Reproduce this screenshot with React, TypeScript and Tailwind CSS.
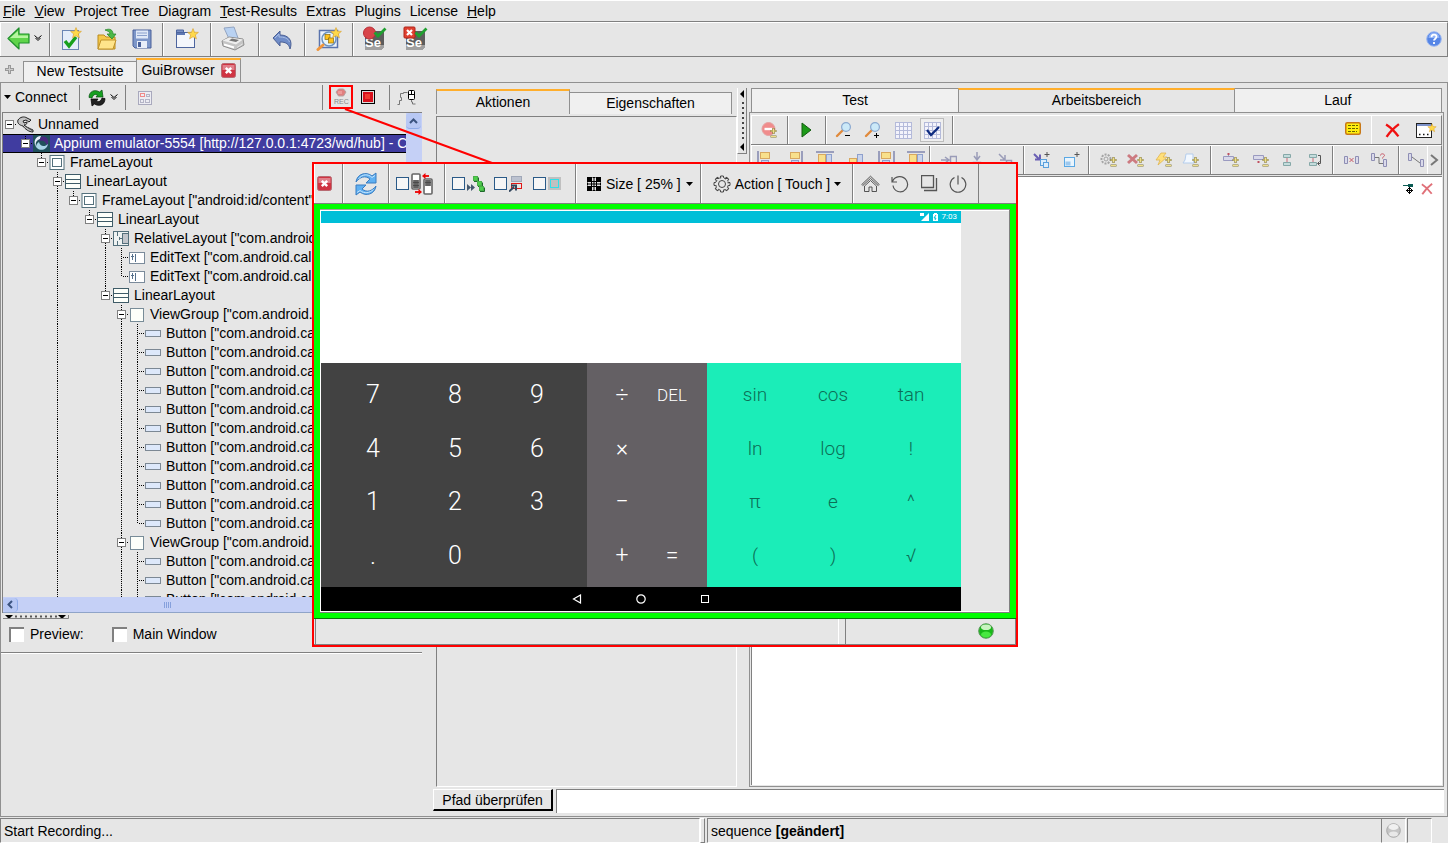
import React from "react";

type Kids = { children?: React.ReactNode };

function Svg({ w = 16, h = 16, vb, children }: Kids & { w?: number; h?: number; vb?: string }) {
  return (
    <svg width={w} height={h} viewBox={vb ?? `0 0 ${w} ${h}`} fill="none" className="block shrink-0" aria-hidden="true">
      {children}
    </svg>
  );
}

function Tool({ label, children, className = "" }: Kids & { label: string; className?: string }) {
  return (
    <button type="button" aria-label={label} className={`flex shrink-0 items-center justify-center ${className}`}>
      {children}
    </button>
  );
}

function Group({ children, className = "" }: Kids & { className?: string }) {
  return (
    <div className={`flex shrink-0 items-center border-r border-l border-r-[#808080] border-l-white ${className}`}>{children}</div>
  );
}

const STAR = "M0-6 1.6-2 6-1.8 2.6 1 3.8 5.4 0 3-3.8 5.4-2.6 1-6-1.8-1.6-2Z";

function Star({ x, y, s = 0.9 }: { x: number; y: number; s?: number }) {
  return <path d={STAR} transform={`translate(${x} ${y}) scale(${s})`} fill="#ffd94a" stroke="#d9a02c" strokeWidth="0.7" />;
}

function BackIcon() {
  return (
    <Svg w={23} h={23}>
      <path d="M1 11.5 12 1v6h10v9H12v6Z" fill="#5fd44a" stroke="#1f8f2c" strokeWidth="1.2" strokeLinejoin="round" />
      <path d="M3 11 11 4v4.500h10v2.500Z" fill="#b7f5a0" />
    </Svg>
  );
}

function DownDouble() {
  return (
    <Svg w={8} h={7}>
      <path d="M0.500 0.500 4 3.500 7.500 0.500M1.500 3 4 5.500 6.500 3" stroke="#000" strokeWidth="1" />
    </Svg>
  );
}

function NewDocIcon() {
  return (
    <Svg w={21} h={24}>
      <rect x="1.5" y="3.500" width="16" height="19" fill="#e4edf9" stroke="#6b86b4" />
      <path d="M4 14 8 19 15 10" stroke="#17a01c" strokeWidth="3.4" />
      <Star x={15} y={6} />
    </Svg>
  );
}

function OpenIcon() {
  return (
    <Svg w={22} h={24}>
      <path d="M2 8h6l2 2h9v12H2Z" fill="#f4c84a" stroke="#b98a1c" />
      <path d="M5 13h15l-3 9H2Z" fill="#ffe48a" stroke="#c0922a" />
      <path d="M9 3c5-2 8 0 8 4h3l-4 5-5-5h3c0-2-2-3-5-4Z" fill="#4cb848" stroke="#2b8a30" strokeWidth="0.800" />
    </Svg>
  );
}

function SaveIcon() {
  return (
    <Svg w={20} h={20}>
      <path d="M1 1h18v18H3l-2-2Z" fill="#7d96c8" stroke="#4a619a" />
      <rect x="4" y="1.500" width="12" height="8" fill="#dfe8f7" />
      <path d="M5 4h10M5 6.500h10" stroke="#8aa0cc" />
      <rect x="5" y="12" width="10" height="7" fill="#e9eef8" />
      <rect x="6" y="13" width="3" height="5" fill="#4a619a" />
    </Svg>
  );
}

function NewWindowIcon() {
  return (
    <Svg w={24} h={22}>
      <path d="M1.500 5.500V2h7v3" fill="#7a90c4" stroke="#4d659e" />
      <rect x="1.500" y="4.500" width="18" height="15" fill="#f4f6fb" stroke="#4d659e" />
      <path d="M2 5h8v2H2Z" fill="#5f78b3" />
      <Star x={18} y={6} />
    </Svg>
  );
}

function PrintIcon() {
  return (
    <Svg w={24} h={25}>
      <path d="M3 2 13 1l4 11-8 3Z" fill="#b9d2f2" stroke="#93a5c2" />
      <path d="M1 15 8 11l14 2 1 6-9 5-12-4Z" fill="#c4c4c4" stroke="#909090" />
      <path d="M1.500 14.500 8 11.500l14 2-7 5Z" fill="#eeeeee" />
      <path d="M8 14.500 15 16l3-2-7-1.500Z" fill="#777" />
      <path d="M3 18.500 13 21.500" stroke="#fff" strokeWidth="2" />
      <path d="M16 21.500 21.500 18" stroke="#e6e6e6" />
    </Svg>
  );
}

function UndoIcon() {
  return (
    <Svg w={21} h={20}>
      <path d="M1 8 8 1v4c9 0 13 6 10 14-1-5-4-7-10-7v4Z" fill="#6f8cc8" stroke="#4a5f94" strokeLinejoin="round" />
      <path d="M3 8 7 4v3c5 0 9 1 10.500 5" stroke="#a9bde4" />
    </Svg>
  );
}

function SearchIcon() {
  return (
    <Svg w={26} h={24}>
      <rect x="3.500" y="3.500" width="18" height="17" fill="#eef3fb" stroke="#5a73ad" strokeWidth="1.500" />
      <circle cx="13" cy="12" r="7" fill="#e6f4fb" stroke="#6d93c0" strokeWidth="1.500" />
      <rect x="9" y="7.500" width="5" height="5" fill="#ffc21c" stroke="#8a6a10" strokeWidth="0.700" />
      <rect x="12.500" y="11" width="5" height="5" fill="#ffc21c" stroke="#8a6a10" strokeWidth="0.700" />
      <path d="M7 18 2 22.500" stroke="#f0963c" strokeWidth="3" strokeLinecap="round" />
      <Star x={20} y={6} />
    </Svg>
  );
}

function SeIcon({ stop }: { stop?: boolean }) {
  return (
    <Svg w={25} h={25}>
      <path d="M3 5h19v16l-3 3H3Z" fill="#5d5d5d" />
      <path d="M3 19h19v2l-3 3H3Z" fill="#a0a0a0" />
      <text x="3" y="21" fill="#fff" fontFamily="Liberation Sans" fontWeight="bold" fontSize="13">Se</text>
      {stop ? (
        <g>
          <rect x="1" y="1" width="11" height="11" rx="1" fill="#e04030" stroke="#b02418" />
          <path d="m4 4 5 5m0-5-5 5" stroke="#fff" strokeWidth="2.200" />
        </g>
      ) : (
        <circle cx="7.500" cy="7" r="6" fill="#d8454a" stroke="#b82c34" />
      )}
      <path d="m12.500 6.500 3.500 3.500 7.500-7.500" stroke="#20a030" strokeWidth="2.800" />
    </Svg>
  );
}

function HelpIcon() {
  return (
    <Svg>
      <circle cx="8" cy="8" r="7.300" fill="#5585e6" stroke="#9db8f0" />
      <path d="M2.500 7a5.500 5.500 0 0 1 11 0Z" fill="#8fb2f6" />
      <path d="M5.500 6.200c0-3.600 5-3.200 5-.4C10.500 7.600 8 7.800 8 9.600M8 11v2" stroke="#fff" strokeWidth="1.800" />
    </Svg>
  );
}

function CloseIcon() {
  return (
    <Svg w={15} h={15}>
      <rect x="0.500" y="0.500" width="14" height="14" rx="2" fill="#cf3442" stroke="#b86a72" />
      <path d="M1.500 2h12v5h-12Z" fill="#e0808a" />
      <path d="m4.800 4.800 5.400 5.400m0-5.400-5.400 5.400" stroke="#fff" strokeWidth="2.400" />
    </Svg>
  );
}

function CycleIcon() {
  return (
    <Svg w={18} h={18}>
      <path d="M1 8.500C1 2 7 0 11.500 3L14 1l1 7H8l1.500-2C7 4.500 5 6 4 9Z" fill="#16a020" stroke="#064d10" strokeWidth="0.700" />
      <path d="M17 9.500C17 16 11 18 6.500 15L4 17 3 10h7l-1.500 2c2.500 1.500 4.500 0 5.500-3Z" fill="#222" stroke="#000" strokeWidth="0.700" />
    </Svg>
  );
}

function RefreshIcon() {
  return (
    <Svg w={24} h={24}>
      <path d="M2 10C3 2 12-1 18 4l4-3v10H12l4-4C11 3 6 5 2 10Z" fill="#5fb0f2" stroke="#3a7cc0" />
      <path d="M22 14c-1 8-10 11-16 6l-4 3V13h10l-4 4c5 4 10 2 14-3Z" fill="#5fb0f2" stroke="#3a7cc0" />
      <path d="M4.500 7C8 2 14 1.500 18 5.500l3-2" stroke="#c5e4fb" />
      <path d="M19.500 17.500C16 21 10 22 6 18.500l-3 2" stroke="#c5e4fb" />
    </Svg>
  );
}

function GridBoxesIcon() {
  return (
    <Svg w={14} h={14}>
      <rect x="0.500" y="0.500" width="13" height="13" fill="#ececf2" stroke="#a9a9bd" />
      <rect x="2.500" y="2.500" width="4" height="3" stroke="#f08a8a" />
      <rect x="8.500" y="3.500" width="3" height="2" stroke="#b4b4c6" />
      <rect x="2.500" y="8.500" width="3" height="3" stroke="#b4b4c6" />
      <rect x="7.500" y="8.500" width="4" height="3" stroke="#b4b4c6" />
    </Svg>
  );
}

function RecIcon() {
  return (
    <Svg w={16} h={18}>
      <path d="M5.500 1h5l2.500 3-2.500 4h-5L3 4Z" fill="#e07f7f" stroke="#b8a0a0" />
      <path d="M5 3h4v3H5Z" fill="#ee9a9a" />
      <text x="1" y="16" fontSize="7" fill="#8a8a8a" fontFamily="Liberation Sans">REC</text>
    </Svg>
  );
}

function StopIcon() {
  return (
    <Svg w={14} h={14}>
      <rect x="0.500" y="0.500" width="13" height="13" fill="#dcdcdc" stroke="#000" />
      <rect x="2" y="2" width="10" height="10" fill="#d8101c" />
      <rect x="4" y="4" width="5" height="5" fill="#f03a30" />
    </Svg>
  );
}

function MouseIcon() {
  return (
    <Svg w={19} h={17}>
      <path d="M0.500 15.500h2v-4h2v-3h-1v-4h3v-1h4" stroke="#777" />
      <rect x="11.500" y="1.500" width="6" height="9" rx="1" fill="#fff" stroke="#000" />
      <path d="M11.500 5.500h6M14.500 1.500v4" stroke="#000" />
      <path d="M14.500 11v2h1v2h3" stroke="#777" />
    </Svg>
  );
}

function PlusMinus({ x, y }: { x: number; y: number }) {
  return (
    <g transform={`translate(${x} ${y})`}>
      <path d="M3.500 0v6M0.500 3h6M0.500 8.500h6" stroke="#857a3a" strokeWidth="2.200" />
      <path d="M3.500 0.500v5M1 3h5M1 8.500h5" stroke="#efe08a" strokeWidth="1" />
    </g>
  );
}

function Magnifier({ plus }: { plus?: boolean }) {
  return (
    <Svg w={17} h={16}>
      <path d="M8 8 2 14" stroke="#e08a3c" strokeWidth="2.400" strokeLinecap="round" />
      <circle cx="11" cy="5" r="4.400" fill="#cbe9f8" stroke="#8aa9d0" strokeWidth="1.200" />
      <path d={plus ? "M10 13.500h5M12.500 11v5" : "M10 13.500h5"} stroke="#000" />
    </Svg>
  );
}

function GridIcon({ check }: { check?: boolean }) {
  return (
    <Svg w={17} h={17}>
      <rect width="17" height="17" fill="#f3f3fb" />
      <path d="M0.500 0v17M4.500 0v17M8.500 0v17M12.500 0v17M16.500 0v17M0 0.500h17M0 4.500h17M0 8.500h17M0 12.500h17M0 16.500h17" stroke="#b4bada" />
      {check && <path d="m3 8 4 5 8-8" stroke="#0c2a80" strokeWidth="2.200" />}
    </Svg>
  );
}

function RemoveIcon() {
  return (
    <Svg w={18} h={17}>
      <circle cx="7.500" cy="7" r="6.500" fill="#f08c8c" stroke="#e4a0a0" />
      <path d="M3.500 7h8" stroke="#fff" strokeWidth="2.400" />
      <PlusMinus x={9} y={6} />
    </Svg>
  );
}

function NoteIcon() {
  return (
    <Svg w={16} h={13}>
      <rect x="0.750" y="0.750" width="14.500" height="11.500" rx="1.500" fill="#ffee10" stroke="#c87818" strokeWidth="1.500" />
      <path d="M3 3.500h10M3 6.500h10M3 9.500h9" stroke="#6b6400" strokeDasharray="3 1" />
    </Svg>
  );
}

function Cross({ color, s = 14 }: { color: string; s?: number }) {
  return (
    <Svg w={s} h={s} vb="0 0 14 14">
      <path d="M1 1.500C5 4 9 8 12.500 12.500M13 1C9 4 4 9 1.500 13" stroke={color} strokeWidth="2.200" />
    </Svg>
  );
}

function WinDotsIcon() {
  return (
    <Svg w={21} h={17}>
      <rect x="0.500" y="1.500" width="15" height="14" fill="#fff" stroke="#222" />
      <rect x="1" y="2" width="14" height="2" fill="#7d92c8" />
      <path d="M3 12.500h11" stroke="#111" strokeWidth="1.500" strokeDasharray="1.500 2.500" />
      <Star x={16} y={6} s={0.7} />
    </Svg>
  );
}

function AlignIcon({ kind }: { kind: number }) {
  const yellow = "#f8e08c";
  const blue = "#c9d4ec";
  return (
    <Svg w={18} h={20}>
      {kind === 0 && <path d="M2 1v18" stroke="#9a9ebc" strokeWidth="2" />}
      {kind === 1 && <path d="M16 1v18" stroke="#9a9ebc" strokeWidth="2" />}
      {(kind === 2 || kind === 5) && <path d="M0 2h18" stroke="#9a9ebc" strokeWidth="2" />}
      {kind === 4 && <path d="M2 1v18M17 1v18" stroke="#9a9ebc" strokeWidth="2" />}
      {kind === 0 || kind === 1 || kind === 4 ? (
        <g>
          <rect x="4.500" y="2.500" width="9" height="6" fill={yellow} stroke="#d8a860" />
          <rect x="5.500" y="10.500" width="7" height="6" fill={blue} stroke="#8fa0cc" />
        </g>
      ) : (
        <g>
          <rect x="2.500" y={kind === 3 ? 8.5 : 4.5} width="7" height="8" fill={yellow} stroke="#d8a860" />
          <rect x="10.500" y="4.500" width="5" height="13" fill={blue} stroke="#8fa0cc" />
        </g>
      )}
    </Svg>
  );
}

function ArrowBox({ kind }: { kind: "right" | "down" | "diag" }) {
  return (
    <Svg w={16} h={16}>
      {kind === "right" && <path d="M0 8h7M4 5l4 3-4 3M9.500 4.500h6v8h-6z" stroke="#9a9cb8" strokeWidth="1.500" />}
      {kind === "down" && <path d="M8 0v7M5 4l3 4 3-4M4.500 10.500h7v5h-7z" stroke="#9a9cb8" strokeWidth="1.500" />}
      {kind === "diag" && <path d="m2 2 6 6M3 8h5V3M9.500 8.500h5v6h-5z" stroke="#9a9cb8" strokeWidth="1.500" />}
    </Svg>
  );
}

function AddShape({ diag }: { diag?: boolean }) {
  return (
    <Svg w={17} h={17}>
      <path d="M14 0v5M11.500 2.500h5" stroke="#555" />
      {diag ? (
        <g>
          <path d="m1 2 5 5M2 7.500h5v-5" stroke="#6a5fb4" strokeWidth="2" />
          <rect x="7.500" y="7.500" width="6" height="6" fill="#dceefc" stroke="#5aa0dc" />
          <rect x="10.500" y="10.500" width="5" height="5" fill="#dceefc" stroke="#5aa0dc" />
        </g>
      ) : (
        <g>
          <rect x="1.500" y="5.500" width="10" height="9" fill="#eaf5fd" stroke="#5aa8e4" />
          <rect x="2.500" y="9.500" width="5" height="4" fill="#9cc8ee" />
        </g>
      )}
    </Svg>
  );
}

function AddNode({ kind }: { kind: "gear" | "cross" | "bolt" | "bell" | "boxup" | "boxdown" }) {
  return (
    <Svg w={18} h={17}>
      {kind === "gear" && (
        <g stroke="#a4a4a4">
          <circle cx="6" cy="7" r="4.500" strokeWidth="2" strokeDasharray="2 1.200" />
          <circle cx="6" cy="7" r="2" />
        </g>
      )}
      {kind === "cross" && <path d="m1 3 9 8M10 3 1 11" stroke="#cc7a80" strokeWidth="3" />}
      {kind === "bolt" && <path d="M6 1h5L8 5h4l-9 8 2-5H1Z" fill="#ffe07a" stroke="#e0b450" strokeWidth="0.800" />}
      {kind === "bell" && <path d="M4 2h7v6l1 3H1l2-3Z" fill="#f2f8ff" stroke="#b4cdec" />}
      {kind === "boxup" && <path d="M1.500 4.500h10v4h-10zM6.500 2v2" fill="#dadaea" stroke="#9a9ac0" />}
      {kind === "boxdown" && <path d="M1.500 3.500h10v4h-10z" fill="#dadaea" stroke="#9a9ac0" />}
      {kind === "boxup" && <path d="M5.500 1h2v2h-2z" fill="#c05060" />}
      {kind === "boxdown" && <path d="M5.500 9h2v2h-2z" fill="#c05060" />}
      <PlusMinus x={10} y={5} />
    </Svg>
  );
}

function Connector({ loop }: { loop?: boolean }) {
  return (
    <Svg w={14} h={14}>
      <path d="M1.500 1.500h7v3h-7zM1.500 9.500h7v3h-7z" fill="#c4dcdc" stroke="#86a8a8" />
      <path d="M5 5v4" stroke="#c86a78" />
      {loop && <path d="M10 2.500h2.500v8H10M9.500 10.500l2-2M9.500 10.500l2 2" stroke="#555" />}
    </Svg>
  );
}

function Pair({ kind }: { kind: "x" | "q" | "line" }) {
  if (kind === "x")
    return (
      <Svg w={15} h={12}>
        <path d="M0.500 2.500h3v7h-3zM11.500 2.500h3v7h-3z" fill="#dadaea" stroke="#8e8eb4" />
        <path d="m5.500 4 4 4m0-4-4 4" stroke="#c85a68" />
      </Svg>
    );
  return (
    <Svg w={17} h={14}>
      <path d="M0.500 0.500h3v7h-3zM12.500 6.500h3v7h-3z" fill="#dadaea" stroke="#8e8eb4" />
      {kind === "q" ? (
        <g>
          <path d="M4 4.500h4v6h4" stroke="#777" />
          <path d="M9.500 2.500c0-2.500 4-2 4 0 0 1.200-2 1-2 3" stroke="#c85a68" />
        </g>
      ) : (
        <path d="m4 4 8 6" stroke="#777" />
      )}
    </Svg>
  );
}

function PhonesIcon() {
  return (
    <Svg w={22} h={22}>
      <rect x="1" y="1" width="8" height="15" rx="1" fill="#fff" stroke="#666" strokeWidth="1.600" />
      <path d="M2 7h6v8H2Z" fill="#777" />
      <path d="M2 9.500h6M2 12.500h6M4 7v8M6 7v8" stroke="#444" strokeWidth="0.800" />
      <rect x="13" y="6" width="8" height="15" rx="1" fill="#fff" stroke="#666" strokeWidth="1.600" />
      <path d="M14 7h6v6h-6Z" fill="#777" />
      <path d="M14 9.500h6M16 7v6M18 7v6" stroke="#444" strokeWidth="0.800" />
      <path d="M18 3h-4" stroke="#e00" strokeWidth="1.800" />
      <path d="m14.500 0-3.500 3 3.500 3Z" fill="#e00" />
      <path d="M4 19h4" stroke="#e00" strokeWidth="1.800" />
      <path d="m7.500 16 3.500 3-3.500 3Z" fill="#e00" />
    </Svg>
  );
}

function CubesIcon() {
  return (
    <Svg w={18} h={16}>
      <path d="m8 3 5 4M13 8l2 4" stroke="#777" strokeDasharray="1 1" />
      {[[6, 0], [10, 5], [12, 10]].map(([x, y]) => (
        <g key={x}>
          <rect x={x + 0.5} y={y + 0.5} width="4" height="4" fill="#4ecf4a" stroke="#48b048" />
          <path d={`M${x + 1} ${y + 5.5}h4.500v-4`} stroke="#1d6a2a" />
        </g>
      ))}
      <path d="m0 8 4 3.500-4 3.500ZM4 8l4 3.500-4 3.500Z" fill="#44586e" />
    </Svg>
  );
}

function PickIcon() {
  return (
    <Svg w={15} h={16}>
      <rect x="2.500" y="0.500" width="10" height="5" fill="#bcc2d0" stroke="#a0a8b8" />
      <rect x="2.500" y="7.500" width="10" height="5" stroke="#e01818" />
      <path d="M0 15.500 5 11M2 9.500h5v5" stroke="#34485e" strokeWidth="2" />
    </Svg>
  );
}

function SizeIcon() {
  return (
    <Svg w={14} h={14}>
      <path d="M0 0h5v5H0ZM9 0h5v5H9ZM0 9h5v5H0ZM9 9h5v5H9Z" fill="#000" />
      <path d="M5.500 0.500h3M5.500 13.500h3M0.500 5.500v3M13.500 5.500v3M5 4.500h4M4.500 5v4M9.500 5v4M5 9.500h4M7 0v14M0 7h14" stroke="#000" strokeWidth="1" />
    </Svg>
  );
}

function GearIcon() {
  const teeth = Array.from({ length: 8 }, (_, i) => i * 45);
  return (
    <Svg w={18} h={18}>
      {teeth.map((a) => (
        <path key={a} d="M7.200 3 7.600 1h2.800l.4 2" transform={`rotate(${a} 9 9)`} stroke="#444" />
      ))}
      <circle cx="9" cy="9" r="6.200" stroke="#444" strokeDasharray="1.800 3.070" strokeDashoffset="-1.500" />
      <circle cx="9" cy="9" r="3.500" stroke="#444" />
    </Svg>
  );
}

function Caret() {
  return (
    <Svg w={7} h={4}>
      <path d="M0 0h7L3.500 4Z" fill="#000" />
    </Svg>
  );
}

function HomeIcon() {
  return (
    <Svg w={19} h={18}>
      <path d="M0.800 9.500 9.500 1.200l8.700 8.300-1 1L9.500 3.400 1.800 10.500ZM3.500 11v5.500H8v-4.500h3v4.500h4.500V11l-6-5.500Z" stroke="#444" strokeWidth="0.900" />
    </Svg>
  );
}

function RotateIcon() {
  return (
    <Svg w={18} h={18}>
      <path d="M1 2v5h5M1.500 6.500C4 0.500 12 0 15.500 5.500 19 12 13 18.500 7 16.500c-3-1-4.500-3-5-6" stroke="#555" strokeWidth="1.200" />
    </Svg>
  );
}

function StackIcon() {
  return (
    <Svg w={17} h={17}>
      <path d="M0.500 0.500h12v12H0.500ZM3 15.500h12.500V3" stroke="#555" strokeWidth="1.300" />
    </Svg>
  );
}

function PowerIcon() {
  return (
    <Svg w={18} h={18}>
      <path d="M5.500 2.500a7.800 7.800 0 1 0 7 0M9 0.500v9" stroke="#555" strokeWidth="1.200" />
    </Svg>
  );
}

/* ---------- tree ---------- */

type IconKind = "root" | "appium" | "frame" | "linear" | "relative" | "edit" | "group" | "button";
type Row = { d: number; icon: IconKind; text: string; open?: boolean; last?: boolean; rails: number[] };

const buttons = (n: number, ends: boolean, rails: number[]): Row[] =>
  Array.from({ length: n }, (_, i) => ({
    d: 8,
    icon: "button" as const,
    text: 'Button ["com.android.ca',
    last: ends && i === n - 1,
    rails,
  }));

const rows: Row[] = [
  { d: 0, icon: "root", text: "Unnamed", open: true, rails: [] },
  { d: 1, icon: "appium", text: "Appium emulator-5554 [http://127.0.0.1:4723/wd/hub] - Cu", open: true, last: true, rails: [] },
  { d: 2, icon: "frame", text: "FrameLayout", open: true, last: true, rails: [] },
  { d: 3, icon: "linear", text: "LinearLayout", open: true, rails: [] },
  { d: 4, icon: "frame", text: 'FrameLayout ["android:id/content"', open: true, last: true, rails: [3] },
  { d: 5, icon: "linear", text: "LinearLayout", open: true, last: true, rails: [3] },
  { d: 6, icon: "relative", text: 'RelativeLayout ["com.android', open: true, rails: [3] },
  { d: 7, icon: "edit", text: 'EditText ["com.android.cal', rails: [3, 6] },
  { d: 7, icon: "edit", text: 'EditText ["com.android.cal', last: true, rails: [3, 6] },
  { d: 6, icon: "linear", text: "LinearLayout", open: true, last: true, rails: [3] },
  { d: 7, icon: "group", text: 'ViewGroup ["com.android.', open: true, rails: [3] },
  ...buttons(11, true, [3, 7]),
  { d: 7, icon: "group", text: 'ViewGroup ["com.android.', open: true, rails: [3] },
  ...buttons(3, false, [3, 7]),
];

function NodeIcon({ kind }: { kind: IconKind }) {
  return (
    <Svg w={17} h={17}>
      {kind === "root" && (
        <g>
          <path d="M1 4c2-3 6-4 9-2l4 2-2 2-3-2-3 1 1 2 3-1c0 2-1 3-3 3 2 2 5 3 9 5v2c-4 0-8-3-10-6C2 9 0 7 1 4Z" fill="#c4c4c4" stroke="#222" />
          <path d="m8 10 7 4.500" stroke="#555" />
        </g>
      )}
      {kind === "appium" && (
        <g>
          <rect width="17" height="17" fill="#20505c" />
          <path d="M8 1C2 1 0 7 3 12c-1-5 1-7 4-8Z" fill="#e8eefa" />
          <path d="M8 2c6-2 9 4 6 9-1-5-4-6-8-5Z" fill="#4a2a80" />
          <path d="M3 12c4 5 11 3 12-3-3 3-8 3-9-2-2 1-3 3-3 5Z" fill="#a8d4e8" />
        </g>
      )}
      {kind === "frame" && (
        <g>
          <rect x="1" y="1.500" width="14" height="14" fill="#fff" stroke="#54707c" />
          <rect x="3.500" y="4.500" width="9" height="8" fill="#fff" stroke="#54707c" />
        </g>
      )}
      {kind === "linear" && (
        <g>
          <rect x="0.500" y="1.500" width="15" height="14" fill="#fdfffa" stroke="#3f5c68" />
          <path d="M1 6.500h14M1 10.500h14" stroke="#3f5c68" />
        </g>
      )}
      {kind === "relative" && (
        <g>
          <rect x="0.500" y="1.500" width="15" height="14" fill="#eef2f2" stroke="#54707c" />
          <path d="M4.500 2v4M4.500 11v4M6 8.500h3M6.500 7v3" stroke="#54707c" />
          <rect x="9.500" y="3.500" width="6" height="10" fill="#c2c6cc" stroke="#54707c" />
        </g>
      )}
      {kind === "edit" && (
        <g>
          <rect x="0.500" y="3.500" width="15" height="11" fill="#fff" stroke="#7b8b9b" />
          <path d="M3.500 5v6M6.500 5v8M2 7.500h3" stroke="#55708c" />
        </g>
      )}
      {kind === "group" && <rect x="1.500" y="2.500" width="13" height="13" fill="#fdfffa" stroke="#788c98" />}
      {kind === "button" && <rect x="0.500" y="5.500" width="15" height="6" fill="#dde8fa" stroke="#7c8894" />}
    </Svg>
  );
}

function Guides({ row }: { row: Row }) {
  const w = 14 + 16 * row.d;
  const c = 6.5 + 16 * row.d;
  const dots = { stroke: "#000", strokeDasharray: "1 1" };
  return (
    <Svg w={w} h={19}>
      {row.rails.map((r) => (
        <path key={r} d={`M${6.5 + 16 * r} 0v19`} {...dots} />
      ))}
      {row.d > 0 && <path d={`M${c} 0v${row.last ? 10 : 19}`} {...dots} />}
      <path d={`M${c + 1.5} 9.500h8`} {...dots} />
      {row.open && (
        <g>
          <rect x={c - 4} y="5.500" width="8" height="8" fill="#fff" stroke="#808080" />
          <path d={`M${c - 2.5} 9.500h5`} stroke="#000" />
        </g>
      )}
    </Svg>
  );
}

function Tree() {
  return (
    <ul className="h-[484px] overflow-hidden pt-0.5">
      {rows.map((row, i) => {
        const selected = i === 1;
        return (
          <li
            key={i}
            className={`flex h-[19px] items-center whitespace-nowrap ${selected ? "bg-[#403ca0] text-white shadow-[inset_0_1px_#000,inset_0_-1px_#000]" : ""}`}
          >
            <Guides row={row} />
            <NodeIcon kind={row.icon} />
            <span className="pb-0.5 pl-1">{row.text}</span>
          </li>
        );
      })}
    </ul>
  );
}

/* ---------- panels ---------- */

const menus: [string, string][] = [
  ["F", "ile"], ["V", "iew"], ["", "Project Tree"], ["", "Diagram"], ["T", "est-Results"],
  ["", "Extras"], ["", "Plugins"], ["", "License"], ["H", "elp"],
];

function ActiveTab({ children, className = "" }: Kids & { className?: string }) {
  return (
    <button type="button" className={`flex items-center justify-center border-t-2 border-r border-l border-t-[#ffae2c] border-r-[#909090] border-l-[#909090] bg-[#e6e6e6] pb-0.5 ${className}`}>
      {children}
    </button>
  );
}

function IdleTab({ children, className = "" }: Kids & { className?: string }) {
  return (
    <button type="button" className={`flex items-center justify-center border-t border-[#909090] bg-[#f0f0f0] pb-0.5 ${className}`}>
      {children}
    </button>
  );
}

function LeftPanel() {
  return (
    <section className="flex w-[421px] shrink-0 flex-col">
      <div className="flex h-[29px] items-center py-0.5">
        <button type="button" className="flex h-full w-[79px] items-center gap-1 border-r border-[#808080] pb-0.5 pl-[3px]">
          <Caret />
          Connect
        </button>
        <div className="flex h-full w-[46px] items-center justify-center gap-1 border-r border-[#808080]">
          <Tool label="Refresh"><CycleIcon /></Tool>
          <Tool label="More"><DownDouble /></Tool>
        </div>
        <Tool label="Layout" className="ml-3"><GridBoxesIcon /></Tool>
        <div className="h-full flex-1 border-r border-[#808080]" />
        <div className="flex w-[66px] items-center pb-px pl-1.5">
          <Tool label="Record" className="h-6 w-6 border-2 border-[#ff0000]"><RecIcon /></Tool>
          <Tool label="Stop" className="ml-2"><StopIcon /></Tool>
        </div>
        <div className="flex h-full w-[33px] items-center justify-center border-l border-[#808080]">
          <Tool label="Pointer"><MouseIcon /></Tool>
        </div>
      </div>
      <div className="ml-px border-t border-l border-[#808080]">
        <div className="flex">
          <div className="min-w-0 flex-1"><Tree /></div>
          <div className="w-4 bg-[#c5d0f6]">
            <Tool label="Scroll up" className="h-4 w-[15px] rounded-sm border-b border-[#8fabe8] bg-[#b8c8f4]">
              <Svg w={9} h={6}><path d="M1 5 4.500 1.500 8 5" stroke="#3c5480" strokeWidth="2" /></Svg>
            </Tool>
          </div>
        </div>
        <div className="flex h-4 items-center border-b border-[#8fa4c8] bg-[#c5d0f6]">
          <Tool label="Scroll left" className="h-[14px] w-[15px] rounded-sm border-r border-[#8fabe8] bg-[#b8c8f4]">
            <Svg w={6} h={9}><path d="M5 1 1.500 4.500 5 8" stroke="#3c5480" strokeWidth="2" /></Svg>
          </Tool>
          <div className="flex flex-1 justify-center pr-[104px]">
            <Svg w={8} h={6}><path d="M0.500 0v6M2.500 0v6M4.500 0v6M6.500 0v6" stroke="#86a0dc" /></Svg>
          </div>
        </div>
      </div>
      <div className="h-[7px] pt-0.5 pl-0.5">
        <Svg w={66} h={5}>
          <path d="M2 0h8L6 4ZM55 0h8l-4 4Z" fill="#000" />
          <path d="M12 1.500h44" stroke="#555" strokeWidth="2" strokeDasharray="2 3" />
          <path d="M0 3.500h65.500V0" stroke="#808080" />
        </Svg>
      </div>
      <div className="flex h-[33px] items-center border-b border-[#808080] pb-1 pl-2 shadow-[0_1px_#fff]">
        <label className="flex items-center gap-1.5">
          <input type="checkbox" className="h-[15px] w-[15px] appearance-none border-t-2 border-l-2 border-[#808080] bg-white" />
          Preview:
        </label>
        <label className="ml-7 flex items-center gap-1.5">
          <input type="checkbox" className="h-[15px] w-[15px] appearance-none border-t-2 border-l-2 border-[#808080] bg-white" />
          Main Window
        </label>
      </div>
    </section>
  );
}

function ActionPanel() {
  return (
    <section className="flex w-[301px] shrink-0 flex-col pt-1.5">
      <div className="flex h-[25px] pr-[5px]">
        <ActiveTab className="w-[134px]">Aktionen</ActiveTab>
        <IdleTab className="mt-[3px] flex-1 border-r">Eigenschaften</IdleTab>
      </div>
      <div className="mt-0.5 flex-1 border border-t-[#808080] border-r-white border-b-white border-l-[#808080]" />
    </section>
  );
}

function Workspace() {
  return (
    <section className="flex min-w-0 flex-1 flex-col pt-[5px]">
      <div className="grid h-6 grid-cols-[3fr_4fr_3fr] px-0.5">
        <IdleTab className="border-l">Test</IdleTab>
        <ActiveTab>Arbeitsbereich</ActiveTab>
        <IdleTab className="border-r">Lauf</IdleTab>
      </div>
      <div className="flex flex-1 flex-col border border-[#909090] pt-0.5 pr-px pb-px pl-px">
        <div className="flex h-[30px] border-t border-r border-b border-t-white border-r-[#808080] border-b-[#808080]">
          <Group className="w-[37px] justify-center"><Tool label="Remove"><RemoveIcon /></Tool></Group>
          <Group className="w-[38px] justify-center">
            <Tool label="Run"><Svg w={12} h={16}><path d="M1 1v14l9-7Z" fill="#1c9a18" stroke="#145c10" /></Svg></Tool>
          </Group>
          <Group className="w-[127px] gap-3 pl-2">
            <Tool label="Zoom out"><Magnifier /></Tool>
            <Tool label="Zoom in"><Magnifier plus /></Tool>
            <Tool label="Grid" className="pl-0.5"><GridIcon /></Tool>
            <Tool label="Snap" className="-ml-1 h-6 w-6 border border-[#bcbcbc] bg-[#efefef]"><GridIcon check /></Tool>
          </Group>
          <div className="flex flex-1 items-center justify-end border-l border-white pr-2.5 pb-1">
            <Tool label="Note"><NoteIcon /></Tool>
          </div>
          <Group className="w-[70px] justify-between border-r-0 border-l-[#808080] pr-1 pl-[13px]">
            <Tool label="Delete"><Cross color="#f01010" s={15} /></Tool>
            <Tool label="New window"><WinDotsIcon /></Tool>
          </Group>
        </div>
        <div className="flex h-[30px] border-t border-r border-b border-t-white border-r-[#808080] border-b-[#808080]">
          <Group className="w-[179px] justify-between px-1">
            {[0, 1, 2, 3, 4, 5].map((k) => (
              <Tool key={k} label={`Align ${k + 1}`}><AlignIcon kind={k} /></Tool>
            ))}
          </Group>
          <Group className="w-[94px] justify-between px-2.5">
            <Tool label="Move right"><ArrowBox kind="right" /></Tool>
            <Tool label="Move down"><ArrowBox kind="down" /></Tool>
            <Tool label="Move diagonal"><ArrowBox kind="diag" /></Tool>
          </Group>
          <Group className="w-[65px] justify-between px-2">
            <Tool label="Duplicate"><AddShape diag /></Tool>
            <Tool label="Add area"><AddShape /></Tool>
          </Group>
          <Group className="w-[122px] justify-between px-2.5">
            <Tool label="Add step"><AddNode kind="gear" /></Tool>
            <Tool label="Add error"><AddNode kind="cross" /></Tool>
            <Tool label="Add event"><AddNode kind="bolt" /></Tool>
            <Tool label="Add alert"><AddNode kind="bell" /></Tool>
          </Group>
          <Group className="w-[122px] justify-between px-2.5">
            <Tool label="Insert before"><AddNode kind="boxup" /></Tool>
            <Tool label="Insert after"><AddNode kind="boxdown" /></Tool>
            <Tool label="Connect"><Connector /></Tool>
            <Tool label="Reconnect"><Connector loop /></Tool>
          </Group>
          <Group className="w-[66px] justify-between px-2.5">
            <Tool label="Disconnect"><Pair kind="x" /></Tool>
            <Tool label="Check link"><Pair kind="q" /></Tool>
          </Group>
          <div className="flex min-w-0 flex-1 items-center justify-end gap-0.5 overflow-hidden border-l border-white pr-0.5">
            <Tool label="Link"><Pair kind="line" /></Tool>
            <Tool label="More tools" className="h-full border-l border-white pl-0.5">
              <Svg w={9} h={14}><path d="m1 2 6 5-6 5" stroke="#777" strokeWidth="2" /></Svg>
            </Tool>
          </div>
        </div>
        <div className="mt-px flex flex-1 items-start justify-end gap-1.5 border-t border-l border-[#808080] bg-white pt-1.5 pr-[9px]">
          <Tool label="Pin">
            <Svg w={12} h={12}>
              <path d="M0 2.500h5" stroke="#0c5c54" />
              <path d="M5 1h5v3H5z" fill="#0c5c54" />
              <path d="m6.500 4.500 3 3-3 3-3-3ZM6.500 4v7M3 7.500h7" fill="#fff" stroke="#000" />
            </Svg>
          </Tool>
          <Tool label="Close view"><Cross color="#e07078" s={12} /></Tool>
        </div>
      </div>
    </section>
  );
}

/* ---------- device window ---------- */

function Check({ label, children }: Kids & { label: string }) {
  return (
    <label className="flex items-center gap-0.5">
      <input type="checkbox" aria-label={label} className="h-[13px] w-[13px] appearance-none border border-[#2a5a88] bg-[#f6f6f6]" />
      {children}
    </label>
  );
}

function DeviceToolbar() {
  return (
    <div className="flex h-10 border-b border-[#808080]">
      <Group className="w-[29px] pl-0.5"><Tool label="Close"><CloseIcon /></Tool></Group>
      <Group className="w-[46px] justify-center"><Tool label="Reload"><RefreshIcon /></Tool></Group>
      <Group className="w-14 pl-1.5"><Check label="Sync"><PhonesIcon /></Check></Group>
      <Group className="w-[131px] gap-[9px] pl-1.5">
        <Check label="Hierarchy"><CubesIcon /></Check>
        <Check label="Select element"><PickIcon /></Check>
        <Check label="Highlight">
          <Svg w={13} h={13}>
            <rect width="13" height="13" fill="#c0c0c0" />
            <rect x="2.500" y="2.500" width="8" height="8" stroke="#30e0e8" />
          </Svg>
        </Check>
      </Group>
      <Group className="w-[125px] pl-2.5">
        <button type="button" className="flex items-center gap-[5px] whitespace-nowrap"><SizeIcon />Size [ 25% ]<Caret /></button>
      </Group>
      <Group className="w-[152px] justify-center">
        <button type="button" className="flex items-center gap-1 whitespace-nowrap"><GearIcon />Action [ Touch ]<Caret /></button>
      </Group>
      <Group className="w-[126px] justify-between pr-[11px] pl-[7px]">
        <Tool label="Home"><HomeIcon /></Tool>
        <Tool label="Back"><RotateIcon /></Tool>
        <Tool label="Apps"><StackIcon /></Tool>
        <Tool label="Power"><PowerIcon /></Tool>
      </Group>
    </div>
  );
}

function Pad({ keys, className }: { keys: string[]; className: string }) {
  return (
    <div className={`grid auto-rows-fr pt-[5px] pb-1 ${className}`}>
      {keys.map((k, i) =>
        k ? (
          <button type="button" key={i} className={k === "DEL" ? "text-[17px]" : ""}>{k}</button>
        ) : (
          <span key={i} />
        ),
      )}
    </div>
  );
}

function Calculator() {
  return (
    <div className="w-[640px] font-['Roboto',sans-serif] font-light">
      <div className="flex h-3 items-center justify-end gap-1 bg-[#00bfd8] pr-1 text-[8px] font-normal text-white">
        <Svg w={9} h={8}><path d="M0 0h4v3H0ZM9 0v8H1Z" fill="#fff" /></Svg>
        <Svg w={5} h={8}><path d="M0 1h5v7H0ZM1 0h3v1H1Z" fill="#fff" /><path d="m3 2-2 3h2l-1 2" stroke="#00bfd8" /></Svg>
        <span>7:03</span>
      </div>
      <div className="h-[140px] bg-white" />
      <div className="flex h-56">
        <Pad
          className="w-[266px] grid-cols-3 bg-[#424242] pr-[9px] pl-[11px] text-[25px] text-white"
          keys={["7", "8", "9", "4", "5", "6", "1", "2", "3", ".", "0", ""]}
        />
        <Pad className="w-[120px] grid-cols-2 bg-[#646064] px-2.5 text-[23px] text-white" keys={["÷", "DEL", "×", "", "−", "", "+", "="]} />
        <Pad
          className="w-[254px] grid-cols-3 bg-[#1bedb8] pr-[11px] pl-[9px] text-[19px] text-[#0c6e56]"
          keys={["sin", "cos", "tan", "ln", "log", "!", "π", "e", "^", "(", ")", "√"]}
        />
      </div>
      <div className="flex h-6 items-center justify-center gap-[54px] bg-black">
        <Tool label="Back"><Svg w={10} h={10}><path d="M8.500 1v8L1.500 5Z" stroke="#fff" strokeWidth="1.200" /></Svg></Tool>
        <Tool label="Home"><Svg w={10} h={10}><circle cx="5" cy="5" r="4.200" stroke="#fff" strokeWidth="1.200" /></Svg></Tool>
        <Tool label="Overview"><Svg w={10} h={10}><rect x="1.500" y="1.500" width="7" height="7" stroke="#fff" /></Svg></Tool>
      </div>
    </div>
  );
}

function DeviceWindow() {
  return (
    <div className="absolute top-[162px] left-[312px] w-[706px] border-2 border-[#ff0000] bg-[#e6e6e6]">
      <DeviceToolbar />
      <div className="border-t-[5px] border-r-[6px] border-b-[5px] border-l-[6px] border-[#00ff00]">
        <div className="border border-l-0 border-t-[#a0a0a0] border-r-[#808080] border-b-[#808080] bg-[#e6e6e6]">
          <div className="border-t border-b border-l border-white">
            <Calculator />
          </div>
        </div>
      </div>
      <div className="flex h-[27px] border-t border-b border-t-[#087808] border-b-[#808080]">
        <div className="ml-px flex-1 border-r border-l border-r-white border-l-[#808080]" />
        <div className="ml-1.5 flex w-[171px] items-center justify-end border-r border-l border-[#808080] pr-[21px] pb-0.5">
          <Svg w={16} h={16}>
            <circle cx="8" cy="8" r="7.300" fill="#18b818" stroke="#5c9a5c" />
            <ellipse cx="8" cy="4.200" rx="5" ry="2.800" fill="#c8f4c0" />
            <ellipse cx="8" cy="11.500" rx="5" ry="3" fill="#48e840" />
          </Svg>
        </div>
      </div>
    </div>
  );
}

export default function App() {
  return (
    <div className="relative flex min-h-screen flex-col overflow-hidden bg-[#e6e6e6] font-['Liberation_Sans',Arial,sans-serif] text-sm leading-4 text-black">
      <nav className="flex h-[22px] items-center gap-[9px] border-t border-b border-t-white border-b-[#808080] pl-[3px]">
        {menus.map(([u, rest]) => (
          <button type="button" key={u + rest}><u>{u}</u>{rest}</button>
        ))}
      </nav>
      <div className="flex h-[35px] border-t border-r border-b border-t-white border-r-[#808080] border-b-[#808080]">
        <Group className="w-[50px] justify-center gap-1 pr-0.5 pb-0.5">
          <Tool label="Back"><BackIcon /></Tool>
          <Tool label="History"><DownDouble /></Tool>
        </Group>
        <Group className="w-[113px] justify-between px-2.5 pb-0.5">
          <Tool label="New"><NewDocIcon /></Tool>
          <Tool label="Open"><OpenIcon /></Tool>
          <Tool label="Save"><SaveIcon /></Tool>
        </Group>
        <Group className="w-12 justify-center pb-0.5"><Tool label="New window"><NewWindowIcon /></Tool></Group>
        <Group className="w-12 justify-center pr-1 pb-0.5"><Tool label="Print"><PrintIcon /></Tool></Group>
        <Group className="w-[46px] justify-center"><Tool label="Undo"><UndoIcon /></Tool></Group>
        <Group className="w-12 justify-center pb-0.5"><Tool label="Search"><SearchIcon /></Tool></Group>
        <div className="flex flex-1 items-center gap-4 border-l border-white pr-[5px] pb-0.5 pl-2">
          <Tool label="Record Selenium"><SeIcon /></Tool>
          <Tool label="Stop Selenium"><SeIcon stop /></Tool>
          <Tool label="Help" className="ml-auto"><HelpIcon /></Tool>
        </div>
      </div>
      <div className="flex h-[25px] items-end">
        <Tool label="Add tab" className="h-full w-[23px] pr-1">
          <Svg w={9} h={9}><path d="M4.500 0v9M0 4.500h9" stroke="#999" strokeWidth="3" /><path d="M4.500 1v7M1 4.500h7" stroke="#ccc" /></Svg>
        </Tool>
        <IdleTab className="h-[21px] w-[113px] border-l">New Testsuite</IdleTab>
        <ActiveTab className="h-6 w-[105px] gap-1.5">GuiBrowser<CloseIcon /></ActiveTab>
      </div>
      <main className="flex flex-1 border border-[#909090]">
        <LeftPanel />
        <div className="ml-[11px] flex min-w-0 flex-1 flex-col">
          <div className="flex flex-1 px-[3px]">
            <ActionPanel />
            <div className="mt-[5px] mr-0.5 flex h-[66px] w-2.5 shrink-0 justify-center border-r border-b border-l border-r-[#808080] border-b-[#808080] border-l-white pt-0.5">
              <Svg w={6} h={62}>
                <path d="M5 0v8L1 4ZM5 53v8l-4-4Z" fill="#000" />
                <path d="M4 12v40" stroke="#444" strokeWidth="2" strokeDasharray="2 3" />
              </Svg>
            </div>
            <Workspace />
          </div>
          <div className="flex h-[29px] items-start gap-[3px] pt-0.5 pr-[3px]">
            <button type="button" className="h-[22px] w-[120px] border-t border-r-2 border-b-2 border-l border-t-white border-r-black border-b-black border-l-white">
              Pfad überprüfen
            </button>
            <input type="text" aria-label="Pfad" className="h-6 min-w-0 flex-1 border-t border-l border-[#808080] bg-white px-1 outline-none" />
          </div>
        </div>
      </main>
      <footer className="flex h-[26px] pt-px">
        <div className="flex w-[700px] items-center border border-t-[#808080] border-r-white border-b-white border-l-[#808080] pl-[3px]">Start Recording...</div>
        <div className="mr-0.5 w-[5px] border border-t-white border-r-[#808080] border-b-[#808080] border-l-white" />
        <div className="flex flex-1 items-center gap-1 border border-t-[#808080] border-r-0 border-b-white border-l-[#808080] pl-[3px]">
          sequence <b>[geändert]</b>
        </div>
        <div className="flex w-[25px] items-center justify-center border border-t-[#808080] border-r-white border-b-white border-l-[#808080]">
          <Svg w={15} h={15}>
            <circle cx="7.500" cy="7.500" r="6.800" fill="#c4c4c4" stroke="#a8a8a8" />
            <ellipse cx="7.500" cy="4" rx="5" ry="3" fill="#f0f0f0" />
            <ellipse cx="7.500" cy="11" rx="4.500" ry="2.500" fill="#e8e8e8" />
          </Svg>
        </div>
        <div className="mr-4 ml-px w-[25px] border border-t-[#808080] border-r-white border-b-white border-l-[#808080]" />
      </footer>
      <svg className="pointer-events-none absolute top-[108px] left-[344px]" width="150" height="56" fill="none" aria-hidden="true">
        <path d="M1 1 148 55" stroke="#ff0000" strokeWidth="2" />
      </svg>
      <DeviceWindow />
    </div>
  );
}
